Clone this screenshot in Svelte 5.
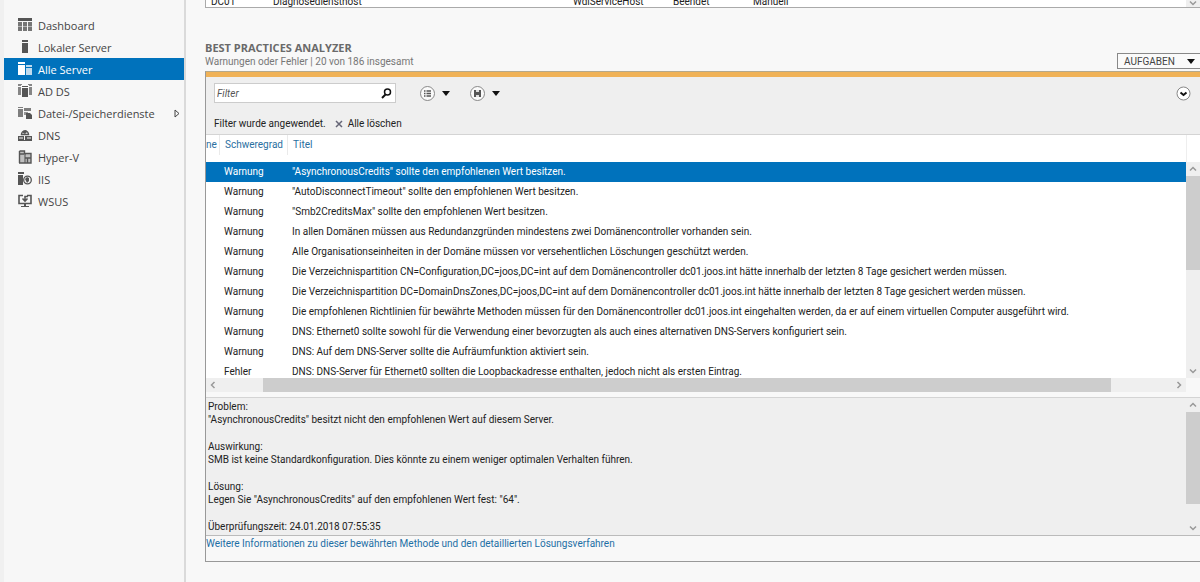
<script>
	const navItems = [
		{ id: 'dashboard', label: 'Dashboard' },
		{ id: 'local', label: 'Lokaler Server' },
		{ id: 'all', label: 'Alle Server' },
		{ id: 'adds', label: 'AD DS' },
		{ id: 'files', label: 'Datei-/Speicherdienste', expandable: true },
		{ id: 'dns', label: 'DNS' },
		{ id: 'hyperv', label: 'Hyper-V' },
		{ id: 'iis', label: 'IIS' },
		{ id: 'wsus', label: 'WSUS' }
	];

	const results = [
		['Warnung', '"AsynchronousCredits" sollte den empfohlenen Wert besitzen.'],
		['Warnung', '"AutoDisconnectTimeout" sollte den empfohlenen Wert besitzen.'],
		['Warnung', '"Smb2CreditsMax" sollte den empfohlenen Wert besitzen.'],
		['Warnung', 'In allen Domänen müssen aus Redundanzgründen mindestens zwei Domänencontroller vorhanden sein.'],
		['Warnung', 'Alle Organisationseinheiten in der Domäne müssen vor versehentlichen Löschungen geschützt werden.'],
		['Warnung', 'Die Verzeichnispartition CN=Configuration,DC=joos,DC=int auf dem Domänencontroller dc01.joos.int hätte innerhalb der letzten 8 Tage gesichert werden müssen.'],
		['Warnung', 'Die Verzeichnispartition DC=DomainDnsZones,DC=joos,DC=int auf dem Domänencontroller dc01.joos.int hätte innerhalb der letzten 8 Tage gesichert werden müssen.'],
		['Warnung', 'Die empfohlenen Richtlinien für bewährte Methoden müssen für den Domänencontroller dc01.joos.int eingehalten werden, da er auf einem virtuellen Computer ausgeführt wird.'],
		['Warnung', 'DNS: Ethernet0 sollte sowohl für die Verwendung einer bevorzugten als auch eines alternativen DNS-Servers konfiguriert sein.'],
		['Warnung', 'DNS: Auf dem DNS-Server sollte die Aufräumfunktion aktiviert sein.'],
		['Fehler', 'DNS: DNS-Server für Ethernet0 sollten die Loopbackadresse enthalten, jedoch nicht als ersten Eintrag.']
	];

	let active = $state('all');
	let selected = $state(0);
	let filter = $state('');
</script>

{#snippet navIcon(id)}
	<svg class="nav-icon" viewBox="0 0 14 14" fill="currentColor" aria-hidden="true">
		{#if id === 'dashboard'}
			<path d="M0 0h14v3H0z" />
			<path d="M0 4h4v4H0zM5 4h4v4H5zM10 4h4v4h-4zM0 8.500h4V13H0zM5 8.500h4V13H5zM10 8.500h4V13h-4z" opacity=".8" />
		{:else if id === 'local'}
			<path d="M4 0h6v2H4zM4 3h6v10H4z" />
		{:else if id === 'all'}
			<path d="M0 0h7v2H0zM0 3h7v10H0z" />
			<path d="M8 3h6v2H8zM8 6h6v7H8z" opacity=".75" />
		{:else if id === 'adds'}
			<path d="M4 2h6v1H4zM4 4h6v9H4z" />
			<path d="M0 0h4v1H3v1H0zM0 3h3v8H0zM10 0h4v2h-3V1h-1zM11 3h3v8h-3z" opacity=".7" />
		{:else if id === 'files'}
			<path d="M0 1h5v1H0zM0 3h5v8H0zM6 2h7v3H6z" opacity=".75" />
			<path d="M6 6h4v3H6z" opacity=".6" />
			<path d="M8 7h4l2 2v4H8z" />
		{:else if id === 'dns'}
			<path d="M3.500 6.500a3.500 3.500 0 0 1 7 0z" fill="none" stroke="currentColor" stroke-width="1.500" />
			<path d="M5 3l3-1 1 2-2 2-2-1z" />
			<path d="M0 8h6v4H0zM7 8h7v4H7zM0 12h14v1H0z" />
			<path d="M1 10h4M9 10h4" stroke="#f7f7f7" />
		{:else if id === 'hyperv'}
			<path d="M1 1h5v12H1zM8 3h5v10H8zM6 4h2v1H6z" opacity=".35" />
			<path d="M1.500 1h5v3M1.500 1v12M7 3.500h6V13H1M7 3v10M1 4h5M9.500 8V13M7 8h6" fill="none" stroke="currentColor" stroke-width="1.400" />
		{:else if id === 'iis'}
			<path d="M0 0h6v2H0zM0 3h5v10H0z" />
			<circle cx="9.500" cy="8" r="3.800" fill="none" stroke="currentColor" stroke-width="1.300" />
			<path d="M7 7l2-2 2 1v3l-2 2-1-2z" />
		{:else}
			<path d="M5 1.500H1v8h12v-8H9" fill="none" stroke="currentColor" stroke-width="1.600" />
			<path d="M6 10h2v2h3v1H3v-1h3z" />
			<path d="M7 7V2.500h3M4.500 4.500L7 7l2.500-2.500" fill="none" stroke="currentColor" stroke-width="1.600" />
		{/if}
	</svg>
{/snippet}

{#snippet chevron(dir)}
	<svg class="chevron {dir}" viewBox="0 0 8 8" aria-hidden="true">
		<path d="M1 5.500L4 2.500L7 5.500" fill="none" stroke="currentColor" stroke-width="1.500" />
	</svg>
{/snippet}

{#snippet caret()}
	<svg class="caret" viewBox="0 0 8 5" aria-hidden="true"><path d="M0 0h8L4 5z" fill="#111" /></svg>
{/snippet}

<div class="window">
	<nav class="sidebar">
		{#each navItems as item}
			<a href="#{item.id}" class="nav-link" class:active={active === item.id} onclick={() => (active = item.id)}>
				{@render navIcon(item.id)}
				<span class="nav-label">{item.label}</span>
				{#if item.expandable}
					<svg class="expand" viewBox="0 0 6 9" aria-hidden="true">
						<path d="M1 1l4 3.500L1 8z" fill="none" stroke="#444" />
					</svg>
				{/if}
			</a>
		{/each}
	</nav>

	<main class="content">
		<section class="services">
			<table class="services-table">
				<tbody>
					<tr>
						<td class="col-server">DC01</td>
						<td class="col-display">Diagnosediensthost</td>
						<td class="col-service">WdiServiceHost</td>
						<td class="col-status">Beendet</td>
						<td>Manuell</td>
					</tr>
				</tbody>
			</table>
			<div class="services-scroll">{@render chevron('down')}</div>
		</section>

		<header class="section-header">
			<div>
				<h2>BEST PRACTICES ANALYZER</h2>
				<p>Warnungen oder Fehler | 20 von 186 insgesamt</p>
			</div>
			<button class="tasks">AUFGABEN {@render caret()}</button>
		</header>

		<section class="panel">
			<div class="toolbar">
				<div class="tools">
					<div class="search">
						<input type="text" placeholder="Filter" aria-label="Filter" bind:value={filter} />
						<button class="search-button" aria-label="Suchen">
							<svg viewBox="0 0 11 11">
								<circle cx="6.500" cy="4" r="3" fill="none" stroke="#111" stroke-width="1.500" />
								<path d="M4.500 6.500L1 10" stroke="#111" stroke-width="2" />
							</svg>
						</button>
					</div>
					<button class="tool criteria" aria-label="Kriterien">
						<svg class="round" viewBox="0 0 15 15">
							<circle cx="7.500" cy="7.500" r="7" fill="#fafafa" stroke="#888" />
							<path d="M4 5h1.500M4 7.500h1.500M4 10h1.500M6.500 5H11M6.500 7.500H11M6.500 10H11" stroke="#555" stroke-width="1.300" />
						</svg>
						{@render caret()}
					</button>
					<button class="tool" aria-label="Abfrage speichern">
						<svg class="round" viewBox="0 0 15 15">
							<circle cx="7.500" cy="7.500" r="7" fill="#fafafa" stroke="#888" />
							<path d="M4 4h7v7H4z" fill="#555" />
							<path d="M6 4h3v2H6zM6 9h3v2H6z" fill="#ddd" />
						</svg>
						{@render caret()}
					</button>
					<button class="tool collapse" aria-label="Filter ausblenden">
						<svg class="round" viewBox="0 0 15 15">
							<circle cx="7.500" cy="7.500" r="6.500" fill="#fff" stroke="#888" />
							<path d="M4.500 6.500l3 2.500 3-2.500" fill="none" stroke="#111" stroke-width="2" />
						</svg>
					</button>
				</div>
				<div class="filter-state">
					<span>Filter wurde angewendet.</span>
					<button class="clear">
						<svg viewBox="0 0 8 8" aria-hidden="true"><path d="M1 1l6 6M7 1L1 7" stroke="#667" stroke-width="1.500" /></svg>
						Alle löschen
					</button>
				</div>
			</div>

			<div class="results">
				<table class="results-table">
					<thead>
						<tr>
							<th class="col-name"><span>ne</span></th>
							<th class="col-severity"><span>Schweregrad</span></th>
							<th><span>Titel</span></th>
						</tr>
					</thead>
					<tbody>
						{#each results as [severity, title], i}
							<tr class:selected={selected === i} onclick={() => (selected = i)}>
								<td></td>
								<td>{severity}</td>
								<td>{title}</td>
							</tr>
						{/each}
					</tbody>
				</table>
				<div class="vscroll-column">
					<div class="head-cap"></div>
					<div class="vscroll">
						{@render chevron('up')}
						<div class="track"><div class="thumb list-thumb"></div></div>
						{@render chevron('down')}
					</div>
				</div>
			</div>
			<div class="hscroll">
				{@render chevron('left')}
				<div class="htrack"><div class="hthumb"></div></div>
				{@render chevron('right')}
			</div>

			<div class="details">
				<div class="details-text">
					<p>Problem:<br />"AsynchronousCredits" besitzt nicht den empfohlenen Wert auf diesem Server.</p>
					<p>Auswirkung:<br />SMB ist keine Standardkonfiguration. Dies könnte zu einem weniger optimalen Verhalten führen.</p>
					<p>Lösung:<br />Legen Sie "AsynchronousCredits" auf den empfohlenen Wert fest: "64".</p>
					<p>Überprüfungszeit: 24.01.2018 07:55:35</p>
				</div>
				<div class="vscroll">
					{@render chevron('up')}
					<div class="track"><div class="thumb details-thumb"></div></div>
					{@render chevron('down')}
				</div>
			</div>
			<a class="more" href="#more">Weitere Informationen zu dieser bewährten Methode und den detaillierten Lösungsverfahren</a>
		</section>
	</main>
</div>

<style>
	:global(body) {
		margin: 0;
		background: #f8f8f8;
	}

	.window {
		display: flex;
		min-height: 100vh;
		overflow: hidden;
		font-family: Roboto, 'Open Sans', sans-serif;
		font-size: 10px;
		color: #222;
	}

	button,
	input {
		font: inherit;
		color: inherit;
	}

	button {
		display: flex;
		align-items: center;
		padding: 0;
		border: none;
		background: none;
	}

	.sidebar {
		box-sizing: border-box;
		flex: none;
		width: 186px;
		padding-top: 14px;
		border-left: 4px solid #f0f0f0;
		border-right: 2px solid #dadada;
		background: #f7f7f7;
	}

	.nav-link {
		display: flex;
		align-items: center;
		height: 22px;
		padding: 0 4px 0 14px;
		font-family: 'Open Sans', sans-serif;
		font-size: 11px;
		color: #444;
		text-decoration: none;
	}

	.nav-link.active {
		background: #0072bc;
		color: #fff;
	}

	.nav-icon {
		width: 14px;
		height: 14px;
		margin-right: 6px;
		color: #555;
	}

	.active .nav-icon {
		color: #fff;
	}

	.nav-label {
		flex: 1;
		white-space: nowrap;
	}

	.expand {
		width: 6px;
		height: 9px;
	}

	.content {
		flex: 1;
		min-width: 0;
		padding-left: 19px;
	}

	.services {
		display: flex;
		align-items: flex-end;
		height: 7px;
		overflow: hidden;
		background: #fff;
		border-left: 1px solid #aaa;
		border-bottom: 1px solid #aaa;
	}

	.services-table {
		flex: 1;
		table-layout: fixed;
		border-collapse: collapse;
		line-height: 10px;
	}

	.services-table td {
		padding: 0 0 0 5px;
	}

	.col-server {
		width: 57px;
	}

	.col-display {
		width: 295px;
	}

	.col-service {
		width: 95px;
	}

	.col-status {
		width: 75px;
	}

	.services-scroll {
		display: flex;
		justify-content: center;
		width: 14px;
		background: #efefef;
		color: #999;
	}

	.section-header {
		display: flex;
		justify-content: space-between;
		align-items: flex-end;
		padding-top: 33px;
	}

	h2 {
		margin: 0;
		font-family: 'Open Sans', sans-serif;
		font-size: 11px;
		line-height: 14px;
		font-weight: 700;
		color: #6a6a6a;
	}

	.section-header p {
		margin: 0;
		padding-bottom: 2px;
		line-height: 14px;
		color: #777;
	}

	.tasks {
		justify-content: space-between;
		box-sizing: border-box;
		width: 83px;
		height: 16px;
		margin-bottom: 2px;
		padding: 0 5px 0 6px;
		border: 1px solid #888;
		border-right: none;
		background: #fafafa;
		color: #444;
	}

	.caret {
		width: 8px;
		height: 5px;
	}

	.panel {
		border-left: 1px solid #999;
		border-bottom: 1px solid #999;
		border-top: 1px solid #b5a98c;
	}

	.toolbar {
		box-sizing: border-box;
		height: 63px;
		padding: 6px 9px 0 8px;
		border-top: 5px solid #f0b257;
		border-bottom: 1px solid #d4d4d4;
		background: #efefef;
	}

	.tools {
		display: flex;
		align-items: center;
	}

	.search {
		display: flex;
		box-sizing: border-box;
		width: 182px;
		height: 20px;
		margin-right: 24px;
		border: 1px solid #ccc;
		background: #fff;
	}

	.search input {
		flex: 1;
		min-width: 0;
		padding: 0 2px;
		border: none;
		outline: none;
		background: none;
	}

	.search input::placeholder {
		font-style: italic;
		color: #555;
	}

	.search-button {
		padding: 0 3px;
	}

	.search-button svg {
		width: 11px;
		height: 11px;
	}

	.tool {
		gap: 7px;
	}

	.criteria {
		margin-right: 20px;
	}

	.round {
		width: 15px;
		height: 15px;
	}

	.collapse {
		margin-left: auto;
	}

	.filter-state {
		display: flex;
		align-items: center;
		gap: 9px;
		margin-top: 13px;
		line-height: 16px;
	}

	.clear {
		gap: 5px;
	}

	.clear svg {
		width: 8px;
		height: 8px;
	}

	.results {
		display: flex;
		height: 243px;
		overflow: hidden;
		background: #fff;
	}

	.results-table {
		flex: 1;
		align-self: flex-start;
		table-layout: fixed;
		border-collapse: collapse;
	}

	th {
		height: 27px;
		padding: 0;
		text-align: left;
		vertical-align: top;
		font-weight: 400;
		color: #2a6f9f;
	}

	th span {
		display: block;
		height: 20px;
		padding-left: 5px;
		line-height: 20px;
		border-left: 1px solid #eaeaea;
	}

	.col-name {
		width: 13px;
	}

	.col-name span {
		padding: 0;
		border: none;
	}

	.col-severity {
		width: 68px;
	}

	.results-table td {
		height: 20px;
		padding: 0 0 0 5px;
		line-height: 20px;
		white-space: nowrap;
	}

	.selected {
		background: #0072bc;
		color: #fff;
	}

	.vscroll-column {
		display: flex;
		flex-direction: column;
	}

	.head-cap {
		height: 27px;
		border-left: 1px solid #eee;
	}

	.vscroll {
		display: flex;
		flex: 1;
		flex-direction: column;
		align-items: center;
		width: 14px;
		padding: 3px 0;
		box-sizing: border-box;
		background: #efefef;
		color: #999;
	}

	.chevron {
		flex: none;
		width: 8px;
		height: 8px;
	}

	.down {
		transform: rotate(180deg);
	}

	.left {
		transform: rotate(-90deg);
	}

	.right {
		transform: rotate(90deg);
	}

	.track {
		flex: 1;
		align-self: stretch;
		margin: 3px 0;
	}

	.thumb {
		background: #cdcdcd;
	}

	.list-thumb {
		height: 50%;
	}

	.details-thumb {
		height: 84%;
	}

	.hscroll {
		display: flex;
		align-items: center;
		height: 14px;
		margin-right: 14px;
		padding: 0 3px;
		background: #efefef;
		color: #999;
	}

	.htrack {
		flex: 1;
		align-self: stretch;
		padding-left: 46px;
	}

	.hthumb {
		width: 93%;
		height: 100%;
		background: #cdcdcd;
	}

	.details {
		display: flex;
		margin-top: 5px;
		border-top: 1px solid #d4d4d4;
		border-bottom: 1px solid #bbb;
		background: #efefef;
	}

	.details .vscroll {
		flex: none;
	}

	.details-text {
		flex: 1;
		padding: 2px 2px 2px;
		line-height: 13px;
	}

	.details-text p {
		margin: 0 0 14px;
	}

	.details-text p:last-child {
		margin: 0;
	}

	.more {
		display: block;
		padding-bottom: 9px;
		line-height: 16px;
		color: #1d6fa5;
		text-decoration: none;
	}
</style>
